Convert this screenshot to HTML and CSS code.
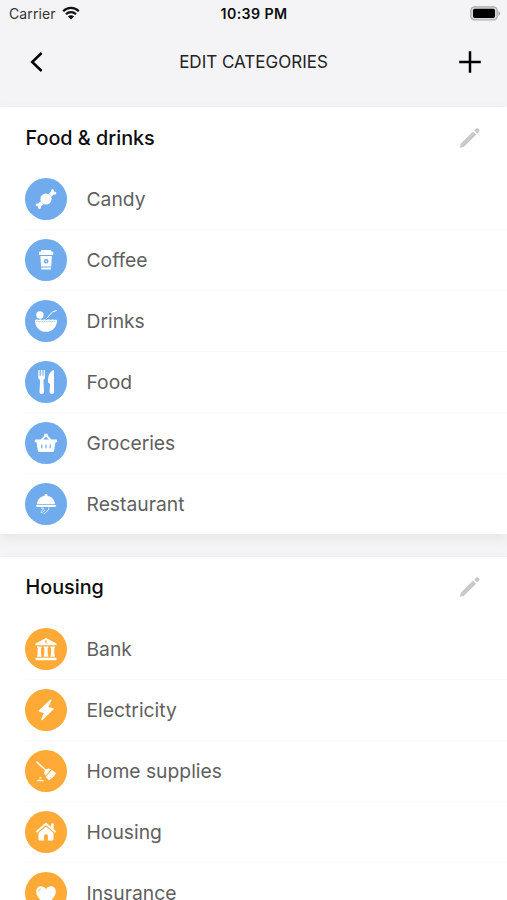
FILE: index.html
```html
<!DOCTYPE html>
<html lang="en">
<head>
    <meta charset="UTF-8">
    <meta name="viewport" content="width=device-width, initial-scale=1.0">
    <title>Edit Categories</title>
    <link rel="stylesheet" href="styles.css">
</head>
<body>
    <div class="status-bar">
        <div class="carrier">
            <span>Carrier</span>
            <svg class="wifi" viewBox="0 0 18 14">
                <path d="M1.2 5.2a11 11 0 0 1 15.6 0M4 8.2a7 7 0 0 1 10 0" fill="none" stroke="#111" stroke-width="2.3"/>
                <path d="M9 13.6 5.9 10.5a4.4 4.4 0 0 1 6.2 0z" fill="#111"/>
            </svg>
        </div>
        <div class="time">10:39 PM</div>
        <svg class="battery" viewBox="0 0 31 15">
            <rect x=".8" y=".8" width="26.4" height="13.2" rx="3.8" fill="#d8d8da" stroke="#aaaaac" stroke-width="1.2"/>
            <rect x="3" y="2.8" width="22" height="9.2" rx="1.8" fill="#000"/>
            <path d="M28.4 5v5c2.2-.7 2.2-4.3 0-5z" fill="#aaaaac"/>
        </svg>
    </div>

    <header>
        <svg class="nav-icon" viewBox="0 0 24 24">
            <path d="M16.6 3 7.2 12l9.400 9" fill="none" stroke="#000" stroke-width="2.5"/>
        </svg>
        <h1>EDIT CATEGORIES</h1>
        <svg class="nav-icon" viewBox="0 0 24 24">
            <path d="M12 1.2v21.600M1.2 12h21.600" fill="none" stroke="#000" stroke-width="2.5"/>
        </svg>
    </header>

    <main>
        <section class="group food">
            <div class="group-title">
                <h2>Food &amp; drinks</h2>
                <svg class="pencil" viewBox="0 0 22 22">
                    <path d="M.8 20.800 1.800 16.800 14 4.600l3.200 3.200L4.800 19.900zM15.200 3.600l2-2c.8-.7 1.800-.6 2.700.3s1 1.900.3 2.700l-2 2z"/>
                </svg>
            </div>
            <ul>
                <li>
                    <svg class="icon" viewBox="0 0 42 42">
                        <circle cx="21" cy="21" r="5.600"/>
                        <path d="M23.800 15.800 26.100 13.500c-.5-2.300 1.500-3.300 2.600-1.700l.3 1.700 1.700.4c1.400 1.200.2 3.200-2 2.500l-2.400 2.300zM18.200 26.200 15.900 28.500c.5 2.300-1.500 3.300-2.600 1.700l-.3-1.700-1.700-.4c-1.400-1.200-.2-3.200 2-2.500l2.400-2.300z"/>
                    </svg>
                    <span>Candy</span>
                </li>
                <li>
                    <svg class="icon" viewBox="0 0 42 42">
                        <path d="M16.500 11h9.400l.8 1.800h1.500v3.200H14v-3.200h1.600zM15.400 17H26.900l-.7 10.600H16.100zM16.200 28.600h9.900l-.2 2h-9.500z"/>
                        <circle class="cut" cx="21.200" cy="22.200" r="2.300"/>
                        <circle cx="21.200" cy="22.200" r=".8"/>
                    </svg>
                    <span>Coffee</span>
                </li>
                <li>
                    <svg class="icon" viewBox="0 0 42 42">
                        <circle cx="14.900" cy="15" r="3.700"/>
                        <path d="M10 20.200l1.500-.9 2 .8 2-.8 2 .8 2-.8 2 .8 2-.8 2 .8 2-.8 2 .8 1.300-.6 1.200.7c0 6.800-4.600 11.600-11 11.600S10 27 10 20.200z"/>
                        <path class="cut-line" d="M11 21.800l1.500-.7 2 .8 2-.8 2 .8 2-.8 2 .8 2-.8 2 .8 2-.8 2 .6" stroke-width=".5"/>
                        <path class="line" d="M21 19l6.600-7.200 4.200-1.300" stroke-width="1"/>
                    </svg>
                    <span>Drinks</span>
                </li>
                <li>
                    <svg class="icon" viewBox="0 0 42 42">
                        <path d="M13.300 9h1.300v5.800h1.200V9h1.600v5.800h1.200V9h1.300v7.400c0 1.500-.8 2-1.500 2.500l.6 12.400c0 2.200-4.500 2.200-4.500 0l.6-12.400c-.8-.5-1.800-1-1.800-2.500zM29 9v22.300c0 2.200-4.400 2.200-4.400 0l.4-8.400-1.900-1.300c-.5-6.300 1.700-11.900 5.900-12.600z"/>
                    </svg>
                    <span>Food</span>
                </li>
                <li>
                    <svg class="icon" viewBox="0 0 42 42">
                        <path class="line" d="M15.800 18.800 21 13.200l5.200 5.600" stroke-width="1.900"/>
                        <path d="M19.300 11.800h3.400v2.500h-3.400zM10.500 17.400h21c.9 0 .9 2.900 0 2.900h-1l-1.400 8.400c-.2.900-.7 1.300-1.500 1.300H14.400c-.8 0-1.300-.4-1.500-1.300l-1.400-8.400h-1c-.9 0-.9-2.900 0-2.900z"/>
                        <path class="cut-line" d="M16.800 22.600v3.600M21 22.600v3.600M25.200 22.600v3.600" stroke-width="1.200"/>
                    </svg>
                    <span>Groceries</span>
                </li>
                <li>
                    <svg class="icon" viewBox="0 0 42 42">
                        <path d="M12 21.200c.3-4.900 3.500-7.700 7.400-8.300-.4-2.400 3.600-2.400 3.200 0 3.900.6 7.100 3.400 7.400 8.300zM11 21.900h20.200c0 1.200-.6 2-1.600 2h-17c-1 0-1.600-.8-1.600-2z"/>
                        <path class="line" d="M16 25l2.800.4-2.500 3.300c-.6 1.200.8 1.700 1.500.8l2.300-2.500M24 24.500l-.4 2.200-2.900 2.800-2 1.500" stroke-width=".8"/>
                    </svg>
                    <span>Restaurant</span>
                </li>
            </ul>
        </section>

        <section class="group housing">
            <div class="group-title">
                <h2>Housing</h2>
                <svg class="pencil" viewBox="0 0 22 22">
                    <path d="M.8 20.800 1.800 16.800 14 4.600l3.200 3.200L4.800 19.900zM15.200 3.600l2-2c.8-.7 1.800-.6 2.700.3s1 1.900.3 2.700l-2 2z"/>
                </svg>
            </div>
            <ul>
                <li>
                    <svg class="icon" viewBox="0 0 42 42">
                        <path d="M21 10 31.500 15.400v1.900h-21v-1.900zM12 18.400h4.600v1.500H16v7.400h.6v1.500H12v-1.500h.6v-7.400H12zM18.700 18.400h4.600v1.500h-.6v7.400h.6v1.500h-4.600v-1.500h.6v-7.400h-.6zM25.400 18.400H30v1.500h-.6v7.400h.6v1.500h-4.600v-1.500h.6v-7.400h-.6zM10.500 29.800h21v2.500h-21z"/>
                        <path class="cut-line" d="M21 12.200v3.500M20 13.300h1.500" stroke-width=".9"/>
                    </svg>
                    <span>Bank</span>
                </li>
                <li>
                    <svg class="icon" viewBox="0 0 42 42">
                        <path d="M25.200 10.800 14 21.300c-.6.600-.5 1.200.3 1.500l4.500 1.300-2.500 6c-.3.900.5 1.400 1.200.8L28.400 20.600c.6-.6.500-1.200-.2-1.400l-4.700-1.300 2.900-6.200c.4-1-.4-1.600-1.200-.9z"/>
                    </svg>
                    <span>Electricity</span>
                </li>
                <li>
                    <svg class="icon" viewBox="0 0 42 42">
                        <path class="line" d="M12 12.200 21.500 21" stroke-width="1.600" stroke-linecap="round"/>
                        <path d="M20 20.600c1.700-2.200 4-2.600 6-1.400l-5.300 6.400c-1.800-1.200-2.200-3-.7-5zM27 19.900l4 3.200c-1.200 2.700-3.700 5.500-7 7.200l-3.500-3.500z"/>
                        <path class="cut-line" d="M26 28.500l-1.200-1.800M28.400 26.200l-1.500-1.800" stroke-width=".5"/>
                        <path d="M14.300 27.300h2.200v1.200h-2.200zM11.500 30.700l2.500-1.300 2 .3 3.300 1v.6h-7.800z"/>
                    </svg>
                    <span>Home supplies</span>
                </li>
                <li>
                    <svg class="icon" viewBox="0 0 42 42">
                        <path class="line" d="M12.100 20.600 21 12.800l8.900 7.800" stroke-width="2" stroke-linecap="round"/>
                        <path d="M26 12.400h2.700v5.700L26 15.700zM21 15.500l7.500 6.600v6.200c0 .7-.4 1.100-1 1.100h-4.600v-4.600c0-2-3.800-2-3.800 0v4.600h-4.600c-.6 0-1-.4-1-1.100v-6.200z"/>
                    </svg>
                    <span>Housing</span>
                </li>
                <li>
                    <svg class="icon" viewBox="0 0 42 42">
                        <path d="M21 32.500C14.500 27.600 11.200 24 11.200 19.500c0-5.400 6.800-7.200 9.800-2.300 3-4.900 9.800-3.100 9.800 2.300 0 4.500-3.300 8.100-9.800 13z"/>
                        <path class="cut-line" d="M13.600 19.500c0-1.500.8-2.400 2.200-2.600" stroke-width=".9"/>
                    </svg>
                    <span>Insurance</span>
                </li>
            </ul>
        </section>
    </main>
</body>
</html>
```

FILE: styles.css
```css
body {
    font-family: Inter, "Liberation Sans", sans-serif;
    margin: 0;
    height: 900px;
    overflow: hidden;
    background-color: #f4f4f7;
    color: #0c0c0c;
}

.status-bar {
    display: grid;
    grid-template-columns: 1fr auto 1fr;
    align-items: center;
    height: 26px;
    padding: 0 6px 2px 9px;
    font-size: 14px;
}

.carrier {
    display: flex;
    align-items: center;
    gap: 6px;
    color: #333;
    letter-spacing: 0.1px;
}

.wifi {
    width: 18px;
    height: 14px;
}

.time {
    font-weight: 600;
    font-size: 14.2px;
    letter-spacing: 0.4px;
    margin-right: 2px;
}

.battery {
    width: 31px;
    height: 15px;
    justify-self: end;
}

header {
    display: flex;
    align-items: center;
    justify-content: space-between;
    height: 68px;
    padding: 0 25px;
    margin-bottom: 11px;
}

header h1 {
    margin: 0;
    font-size: 17px;
    font-weight: 400;
    color: #222;
}

.nav-icon {
    width: 24px;
    height: 24px;
}

.group {
    background: #fff;
    margin-bottom: 22.3px;
    box-shadow: 0 4px 12px rgba(0, 0, 0, 0.06);
}

.group-title {
    display: flex;
    align-items: center;
    justify-content: space-between;
    height: 61.4px;
    padding: 0 26px 0 25.5px;
}

.group-title h2 {
    margin: 0;
    font-size: 19.8px;
    font-weight: 500;
}

.pencil {
    width: 22px;
    height: 22px;
    fill: #c9c9c9;
}

ul {
    list-style: none;
    margin: 0;
    padding: 0 0 0 25px;
}

li {
    display: flex;
    align-items: center;
    gap: 19.5px;
    height: 61px;
    font-size: 19.3px;
    color: #606060;
    box-shadow: 0 1px #fbfbfb;
}

li:last-child {
    box-shadow: none;
}

.icon {
    width: 42px;
    height: 42px;
    border-radius: 50%;
    fill: #fff;
}

.icon .line {
    fill: none;
    stroke: #fff;
}

.food .icon {
    background-color: #70abed;
}

.food .cut {
    fill: #70abed;
}

.food .cut-line {
    fill: none;
    stroke: #70abed;
}

.housing .icon {
    background-color: #ffaa36;
}

.housing .cut-line {
    fill: none;
    stroke: #ffaa36;
}
```
